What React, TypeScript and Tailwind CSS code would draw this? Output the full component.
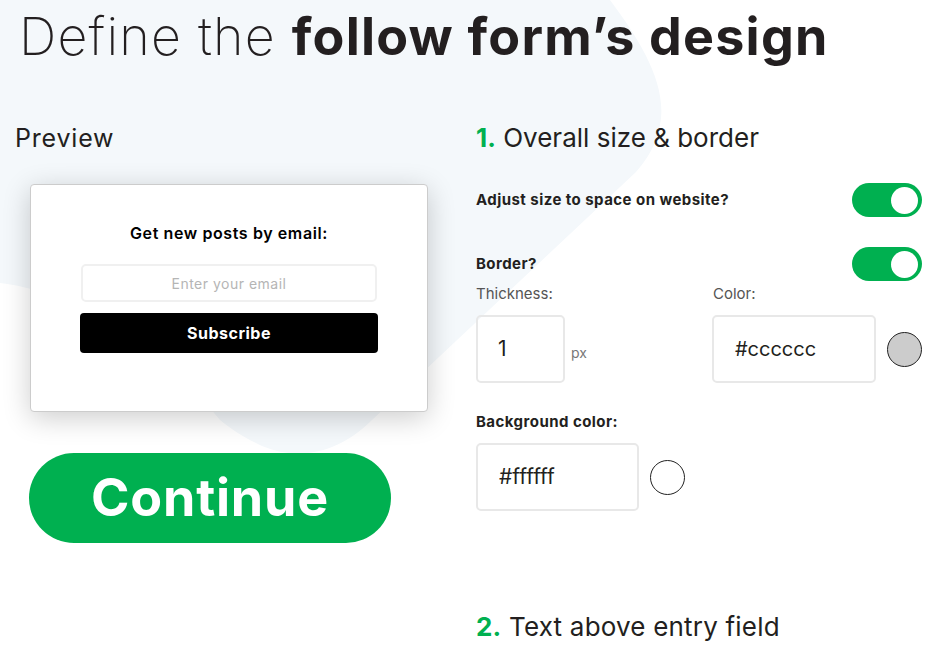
import React from 'react';

const Toggle: React.FC = () => (
  <div className="w-[70px] h-[34px] rounded-full bg-[#00b050] flex items-center justify-end pr-[4px] shrink-0">
    <div className="w-[27px] h-[27px] rounded-full bg-white" />
  </div>
);

const Swatch: React.FC<{ color: string }> = ({ color }) => (
  <div className="w-[35px] h-[35px] rounded-full border border-[#222]" style={{ backgroundColor: color }} />
);

export default function App() {
  return (
    <div className="relative w-[943px] h-[645px] overflow-hidden bg-white text-[#231f20] font-['Inter','Noto_Sans',sans-serif]">
      {/* background blob */}
      <svg className="absolute left-0 top-0" width="943" height="645" viewBox="0 0 943 645">
        <path
          d="M0 0 L610 0 C640 40 668 85 660 125 C656 145 648 158 636 172 L372 420 C340 452 300 462 262 446 C245 438 232 430 220 420 C150 330 60 290 0 283 Z"
          fill="#f4f8fb"
        />
      </svg>

      <div className="relative">
        <h1 className="pl-[19px] pt-[5px] h-[123px] text-[52px] leading-[64px] tracking-[1.2px]">
          <span className="font-extralight">Define the </span>
          <span className="font-bold">follow form’s design</span>
        </h1>

        <div className="grid grid-cols-[476px_1fr]">
          {/* left column */}
          <div>
            <div className="pl-[15px] text-[25px] leading-[30px] tracking-[0.8px]">Preview</div>
            <div className="ml-[30px] mt-[31px] w-[398px] h-[228px] bg-white border border-[#cccccc] rounded-[4px] shadow-[0_6px_28px_rgba(0,0,0,0.2)] flex flex-col items-center pt-[38px]">
              <div className="text-[16px] leading-[20px] font-semibold tracking-[0.6px] text-black">Get new posts by email:</div>
              <div className="mt-[21px] w-[296px] h-[38px] border-2 border-[#f0f0f0] rounded-[5px] flex items-center justify-center text-[14px] tracking-[0.5px] text-[#b5b5b5]">
                Enter your email
              </div>
              <button className="mt-[11px] w-[298px] h-[40px] bg-black rounded-[4px] text-white text-[16px] font-bold tracking-[0.5px]">
                Subscribe
              </button>
            </div>
            <button className="ml-[29px] mt-[41px] w-[362px] h-[90px] rounded-full bg-[#00b050] text-white text-[52px] font-bold tracking-[0.8px]">
              Continue
            </button>
          </div>

          {/* right column */}
          <div className="pr-[21px]">
            <div className="text-[26px] leading-[30px]">
              <span className="text-[#00b050] font-bold">1.</span> Overall size &amp; border
            </div>

            <div className="mt-[30px] flex items-center justify-between">
              <span className="text-[15px] font-bold tracking-[0.45px]">Adjust size to space on website?</span>
              <Toggle />
            </div>

            <div className="mt-[30px] flex items-center justify-between">
              <span className="text-[15px] font-bold tracking-[0.45px]">Border?</span>
              <Toggle />
            </div>

            <div className="mt-[3px] flex text-[15px] leading-[20px] text-[#555]">
              <span className="w-[237px]">Thickness:</span>
              <span>Color:</span>
            </div>

            <div className="mt-[11px] flex items-center">
              <div className="w-[89px] h-[68px] border-2 border-[#e8e8e8] rounded-[5px] flex items-center pl-[20px] text-[21px]">1</div>
              <span className="ml-[6px] mt-[6px] text-[14px] text-[#777]">px</span>
              <div className="ml-[125px] w-[164px] h-[68px] border-2 border-[#e8e8e8] rounded-[5px] flex items-center pl-[21px] text-[20px]">#cccccc</div>
              <div className="ml-auto">
                <Swatch color="#cccccc" />
              </div>
            </div>

            <div className="mt-[29px] text-[15px] leading-[20px] font-bold tracking-[0.45px]">Background color:</div>

            <div className="mt-[11px] flex items-center">
              <div className="w-[163px] h-[68px] border-2 border-[#e8e8e8] rounded-[5px] flex items-center pl-[21px] text-[21px]">#ffffff</div>
              <div className="ml-[11px]">
                <Swatch color="#ffffff" />
              </div>
            </div>

            <div className="mt-[101px] text-[26px] leading-[30px] tracking-[0.2px]">
              <span className="text-[#00b050] font-bold">2.</span> Text above entry field
            </div>
          </div>
        </div>
      </div>
    </div>
  );
}
